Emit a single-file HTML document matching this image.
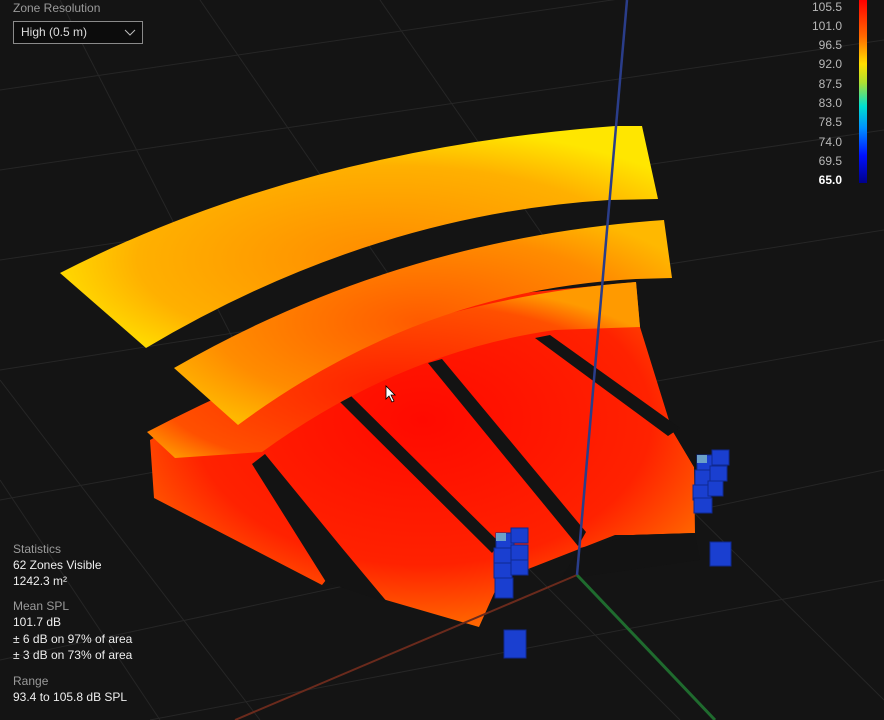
<!DOCTYPE html>
<html><head><meta charset="utf-8"><style>
html,body{margin:0;padding:0;background:#141414;width:884px;height:720px;overflow:hidden;font-family:"Liberation Sans",sans-serif}
svg{position:absolute;left:0;top:0}
.t{position:absolute;font-size:12px;line-height:16px;white-space:nowrap}
.l{color:#9a9a9a}.v{color:#eee}
.lg{position:absolute;right:42px;font-size:12px;color:#b8b8b8;text-align:right;width:60px}
</style></head><body>
<svg width="884" height="720" viewBox="0 0 884 720">
<defs>
<radialGradient id="g1" cx="0.55" cy="0.6" r="0.6"><stop offset="0" stop-color="#ff8a00"/><stop offset="0.7" stop-color="#ffb000"/><stop offset="1" stop-color="#ffe600"/></radialGradient>
<radialGradient id="g2" cx="0.5" cy="0.5" r="0.6"><stop offset="0" stop-color="#ff5a00"/><stop offset="0.7" stop-color="#ff8c00"/><stop offset="1" stop-color="#ffb800"/></radialGradient>
<radialGradient id="g3" cx="0.5" cy="0.6" r="0.6"><stop offset="0" stop-color="#ff2000"/><stop offset="0.8" stop-color="#ff5000"/><stop offset="1" stop-color="#ff9a00"/></radialGradient>
<radialGradient id="g4" cx="0.5" cy="0.4" r="0.7"><stop offset="0" stop-color="#ff0a00"/><stop offset="0.6" stop-color="#ff2200"/><stop offset="1" stop-color="#ff8c00"/></radialGradient>
<linearGradient id="cb" x1="0" y1="0" x2="0" y2="1"><stop offset="0" stop-color="#ff0000"/><stop offset="0.2" stop-color="#ff6a00"/><stop offset="0.35" stop-color="#ffe000"/><stop offset="0.45" stop-color="#b0e030"/><stop offset="0.58" stop-color="#00e0d0"/><stop offset="0.7" stop-color="#0090ff"/><stop offset="0.85" stop-color="#0010ff"/><stop offset="1" stop-color="#00008a"/></linearGradient>
</defs>
<g stroke="#262626" stroke-width="1" fill="none">
<path d="M0,90 L884,-40"/><path d="M0,170 L884,40"/><path d="M0,260 L884,130"/><path d="M0,370 L884,230"/><path d="M0,500 L884,340"/><path d="M0,660 L884,470"/><path d="M150,720 L884,580"/>
<path d="M200,0 L420,320"/><path d="M60,0 L300,470"/><path d="M0,380 L260,720"/><path d="M380,0 L560,260"/><path d="M600,420 L884,700"/><path d="M520,560 L680,720"/><path d="M0,480 L160,720"/>
</g>
<path d="M154,498 L150,440 L300,360 L450,300 L636,282 L640,327 L672,430 L694,467 L695,533 L633,535 L615,535 L500,580 L479,627 L386,600 L326,580 L322,585 Z" fill="url(#g4)"/>
<g fill="#131313">
<path d="M252,464 L265,454 L342,548 L388,603 L326,582 Z"/>
<path d="M338,400 L350,395 L500,543 L492,553 Z"/>
<path d="M428,363 L442,359 L586,532 L578,546 Z"/>
<path d="M535,338 L550,335 L680,428 L668,436 Z"/>
<path d="M580,548 L633,535 L695,533 L700,560 L560,580 Z"/>
<path d="M672,430 L700,430 L700,467 L694,467 Z"/>
</g>
<path d="M147,432 Q400,300 636,282 L640,327 L555,330 Q400,352 262,452 L175,458 Z" fill="url(#g3)"/>
<path d="M174,368 Q400,238 664,220 L672,278 L636,279 Q420,290 238,425 Z" fill="url(#g2)"/>
<path d="M60,273 Q300,150 615,126 L642,126 L658,199 L609,200 Q370,215 146,348 Z" fill="url(#g1)"/>
<line x1="577" y1="575" x2="235" y2="720" stroke="#6a2a1c" stroke-width="2"/>
<line x1="577" y1="575" x2="715" y2="720" stroke="#1f6b2e" stroke-width="3"/>
<line x1="627" y1="0" x2="577" y2="575" stroke="#2a3d8a" stroke-width="2.5"/>
<g fill="#1a3fd0" stroke="#0f2890" stroke-width="1">
<rect x="496" y="533" width="18" height="15"/><rect x="511" y="528" width="17" height="15"/>
<rect x="494" y="548" width="18" height="15"/><rect x="511" y="545" width="17" height="15"/>
<rect x="494" y="563" width="18" height="15"/><rect x="511" y="560" width="17" height="15"/>
<rect x="495" y="578" width="18" height="20"/>
<rect x="697" y="455" width="18" height="15"/><rect x="712" y="450" width="17" height="15"/>
<rect x="695" y="470" width="18" height="15"/><rect x="710" y="466" width="17" height="15"/>
<rect x="693" y="485" width="18" height="15"/><rect x="708" y="481" width="15" height="15"/>
<rect x="694" y="498" width="18" height="15"/>
<rect x="710" y="542" width="21" height="24"/>
<rect x="504" y="630" width="22" height="28"/>
</g>
<rect x="496" y="533" width="10" height="8" fill="#6aa0c8"/><rect x="697" y="455" width="10" height="8" fill="#6aa0c8"/>
<path d="M386,386 L386,399 L389,396 L392,402 L394,401 L391,395 L395,395 Z" fill="#fff" stroke="#000" stroke-width="0.8"/>
<rect x="859" y="0" width="8" height="183" fill="url(#cb)"/>
</svg>
<div class="t l" style="left:13px;top:0px">Zone Resolution</div>
<div style="position:absolute;left:13px;top:21px;width:128px;height:21px;border:1px solid #8a8a8a;background:#0c0c0c"></div>
<div class="t v" style="left:21px;top:24px;color:#ddd">High (0.5 m)</div>
<svg width="12" height="8" style="left:124px;top:29px"><path d="M1,1 L6,6 L11,1" stroke="#bbb" fill="none" stroke-width="1"/></svg>
<div class="lg" style="top:0">105.5</div><div class="lg" style="top:19px">101.0</div><div class="lg" style="top:38px">96.5</div><div class="lg" style="top:57px">92.0</div><div class="lg" style="top:77px">87.5</div><div class="lg" style="top:96px">83.0</div><div class="lg" style="top:115px">78.5</div><div class="lg" style="top:135px">74.0</div><div class="lg" style="top:154px">69.5</div><div class="lg" style="top:173px;color:#fff;font-weight:bold">65.0</div>
<div class="t l" style="left:13px;top:541px">Statistics</div>
<div class="t v" style="left:13px;top:557px">62 Zones Visible</div>
<div class="t v" style="left:13px;top:573px">1242.3 m²</div>
<div class="t l" style="left:13px;top:598px">Mean SPL</div>
<div class="t v" style="left:13px;top:614px">101.7 dB</div>
<div class="t v" style="left:13px;top:631px">± 6 dB on 97% of area</div>
<div class="t v" style="left:13px;top:647px">± 3 dB on 73% of area</div>
<div class="t l" style="left:13px;top:673px">Range</div>
<div class="t v" style="left:13px;top:689px">93.4 to 105.8 dB SPL</div>
</body></html>
